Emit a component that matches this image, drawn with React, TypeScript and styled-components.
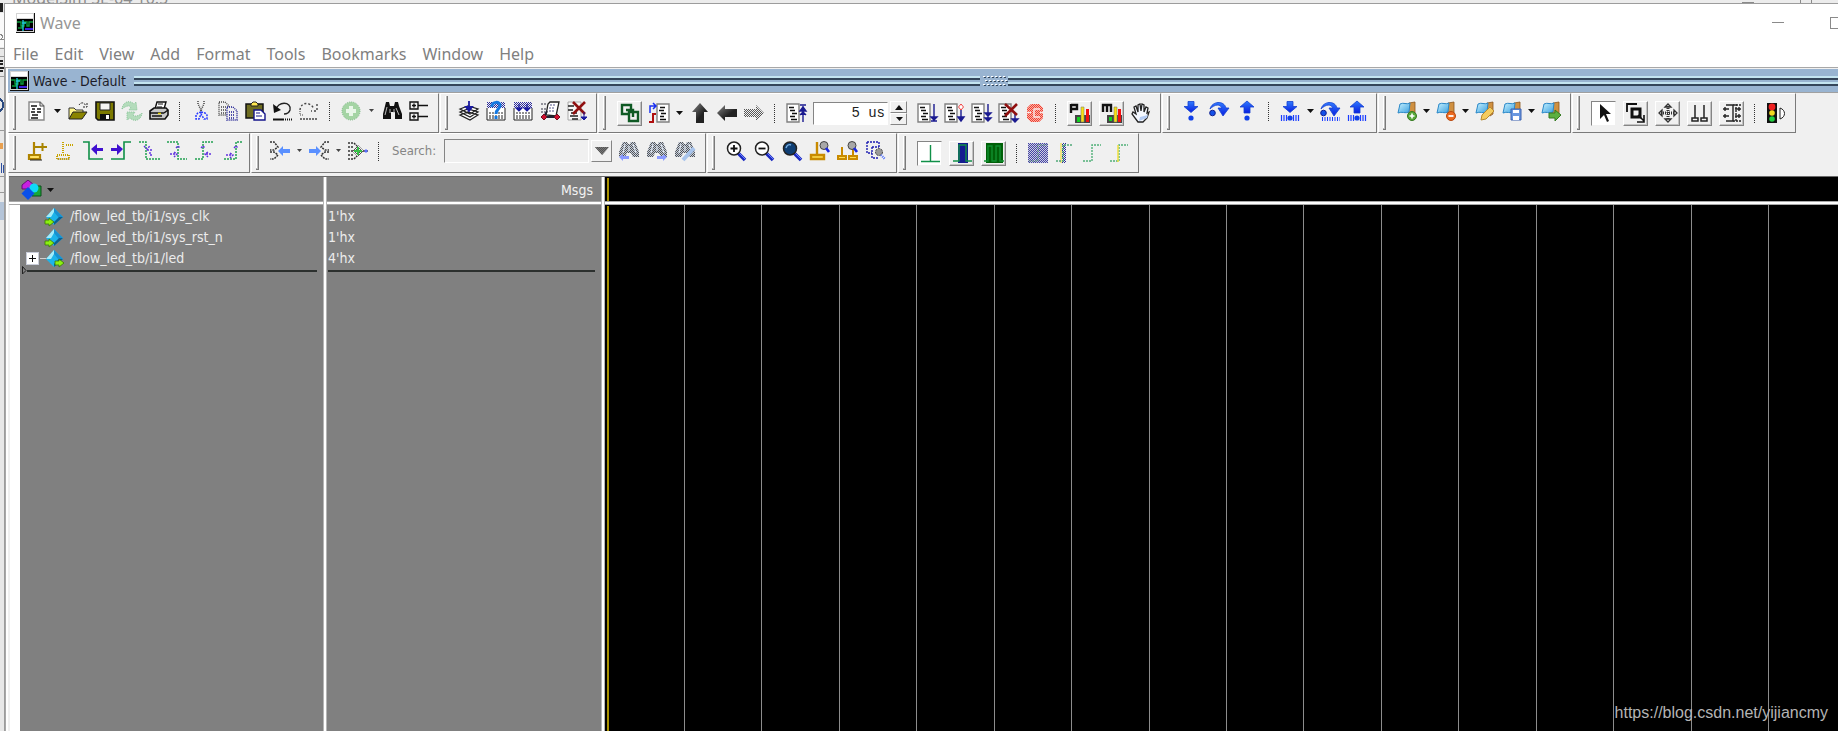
import React from "react";
import styled, { createGlobalStyle, css } from "styled-components";

const face = "#f0f0f0";
const shadow = "#7a7a7a";
const caption = "#99b4d1";
const pane = "#808080";
const uiFont = `"DejaVu Sans Condensed", "DejaVu Sans", sans-serif`;

const GlobalStyle = createGlobalStyle`
  *, *::before, *::after { box-sizing: border-box; }
  html, body { margin: 0; padding: 0; }
  body { overflow: hidden; background: ${face}; font-family: "Noto Sans", "Open Sans", sans-serif; }
  button, input { font: inherit; margin: 0; }
`;

/* ---------- window frame ---------- */

const Desktop = styled.div`
  position: relative;
  display: grid;
  grid-template-columns: 4px minmax(0, 1fr);
  grid-template-rows: 3px minmax(0, 1fr);
  height: 100vh;
  overflow: hidden;
  background: #e8e8e8;
`;

const BackTitle = styled.div`
  grid-column: 1 / -1;
  display: flex;
  align-items: flex-end;
  justify-content: space-between;
  overflow: hidden;
  padding-left: 12px;
  background: #ececec;
  color: #8c8c8c;
  font-size: 16px;
  line-height: 10px;
  white-space: nowrap;
`;

const BackMarks = styled.div`
  display: flex;
  gap: 10px;
  width: 96px;
  height: 3px;
  i { width: 1px; background: #8a8a8a; }
  i:first-child { width: 12px; height: 1px; margin: 2px 36px 0 0; }
`;

const BackEdge = styled.div`
  overflow: hidden;
  background: #e8e8e8;
`;

const Window = styled.main`
  display: flex;
  flex-direction: column;
  min-width: 0;
  border-top: 1px solid #9c9c9c;
  border-left: 1px solid #9c9c9c;
  background: #fff;
`;

const TitleBar = styled.header`
  display: flex;
  align-items: center;
  height: 36px;
  padding: 2px 0 0 11px;
  overflow: hidden;
  flex: none;
`;

const Title = styled.h1`
  margin: 0 auto 0 5px;
  font-size: 16px;
  line-height: 24px;
  font-weight: 400;
  color: #969696;
`;

const FrameButton = styled.button`
  display: flex;
  justify-content: center;
  width: 58px;
  padding: 0;
  border: 0;
  background: none;
`;

const FrameButtons = styled.div`
  display: flex;
  flex: none;
  margin-right: -27px;
`;

const MenuBar = styled.nav`
  display: flex;
  align-items: center;
  flex: none;
  gap: 16px;
  height: 27px;
  padding: 0 8px;
`;

const MenuItem = styled.button`
  padding: 0;
  border: 0;
  background: none;
  color: #808080;
  font-size: 16px;
  line-height: 20px;
`;

/* ---------- docked wave panel ---------- */

const Dock = styled.section`
  display: flex;
  flex-direction: column;
  flex: 1;
  min-height: 0;
  border-top: 1px solid #a8a8a8;
  border-left: 1px solid #a8a8a8;
  box-shadow: inset 2px 0 0 #fff;
  padding-left: 2px;
  background: ${face};
`;

const DockHeader = styled.header`
  display: flex;
  align-items: center;
  flex: none;
  height: 25px;
  padding-left: 2px;
  border-top: 1px solid ${face};
  border-bottom: 1px solid #a0a0a0;
  background: ${caption};
`;

const DockTitle = styled.h2`
  margin: 0 8px 0 4px;
  font-family: ${uiFont};
  font-size: 14px;
  line-height: 20px;
  font-weight: 400;
  color: #1c1c28;
`;

const Rails = styled.div`
  flex: ${(p: { $grow: number }) => p.$grow} 1 0;
  display: grid;
  gap: 2px;
  i {
    height: 4px;
    border-top: 2px solid #c4e4f0;
    border-bottom: 2px solid #35465a;
  }
`;

/* ---------- toolbars ---------- */

const ToolRow = styled.div`
  display: flex;
  flex: none;
  gap: 1px;
  height: 40px;
`;

const ToolBarBox = styled.div<{ $lift?: boolean; $tight?: boolean }>`
  display: flex;
  align-items: center;
  flex: none;
  padding: 0 ${(p) => (p.$tight ? 2 : 6)}px ${(p) => (p.$lift ? 4 : 0)}px 0;
  border: 1px solid #fff;
  border-right-color: ${shadow};
  border-bottom-color: ${shadow};
`;

const Grip = styled.span<{ $lift?: boolean }>`
  flex: none;
  width: 3px;
  height: 34px;
  margin: ${(p) => (p.$lift ? 4 : 0)}px 7px 0 4px;
  border: 1px solid ${shadow};
  border-width: 0 1px 1px 0;
  box-shadow: inset -1px -1px 0 #b8b8b8, inset 1px 0 0 #fff;
`;

const Tool = styled.button<{ $wide?: boolean }>`
  display: flex;
  align-items: center;
  justify-content: center;
  flex: none;
  width: ${(p) => (p.$wide ? 28 : 27)}px;
  height: 25px;
  padding: 0;
  border: 0;
  background: none;
`;

const BoxTool = styled(Tool)<{ $pressed?: boolean }>`
  width: 25px;
  margin: 0 3px 0 4px;
  border: 1px solid;
  border-color: #fff #858585 #858585 #fff;
  box-shadow: inset -1px -1px 0 #c2c2c2;
  ${(p) =>
    p.$pressed &&
    css`
      background: #fff;
      border-color: #858585 ${face} ${face} #858585;
      box-shadow: none;
    `}
`;

const CaretTool = styled(Tool)<{ $narrow?: boolean }>`
  width: ${(p) => (p.$narrow ? 12 : 14)}px;
`;

const Divider = styled.span`
  flex: none;
  width: 1px;
  height: 19px;
  margin: 0 7px;
  background: repeating-linear-gradient(#333 0 1px, transparent 1px 2px);
`;

const TimeInput = styled.input`
  width: 75px;
  height: 23px;
  margin-left: 4px;
  padding: 0 2px;
  border: 1px solid;
  border-color: #858585 #fff #fff #858585;
  background: #fff;
  color: #222;
  font-family: "Liberation Mono", monospace;
  font-size: 14px;
  text-align: right;
`;

const Spinner = styled.span`
  display: grid;
  width: 17px;
  height: 24px;
  margin: 0 6px 0 2px;
  button {
    display: flex;
    align-items: center;
    justify-content: center;
    padding: 0;
    background: ${face};
    border: 1px solid;
    border-color: #fff #858585 #858585 #fff;
  }
`;

const SearchLabel = styled.label`
  margin: 0 8px 0 6px;
  color: #858585;
  font-family: ${uiFont};
  font-size: 13px;
  line-height: 20px;
`;

const SearchInput = styled.input`
  width: 145px;
  height: 24px;
  border: 1px solid;
  border-color: #858585 #fff #fff #858585;
  background: ${face};
`;

const DropButton = styled(Tool)`
  width: 21px;
  height: 22px;
  margin: 0 3px 0 2px;
  border: 1px solid;
  border-color: #fff #858585 #858585 #fff;
`;

/* ---------- wave area ---------- */

const WaveArea = styled.div`
  display: grid;
  grid-template-columns: 314px 4px 274px 4px minmax(0, 1fr);
  grid-template-rows: 24px 4px minmax(0, 1fr);
  flex: 1;
  min-height: 0;
  margin: 3px 0 0 1px;
  border-top: 1px solid #6a6a6a;
`;

const HeadCell = styled.div<{ $right?: boolean; $dark?: boolean }>`
  display: flex;
  align-items: center;
  justify-content: ${(p) => (p.$right ? "flex-end" : "flex-start")};
  padding: ${(p) => (p.$dark ? "0" : "2px 8px 0 12px")};
  background: ${(p) => (p.$dark ? "#000" : pane)};
  color: #f2f2f2;
  font-family: ${uiFont};
  font-size: 14px;
  line-height: 20px;
`;

const Sash = styled.div`
  grid-row: 1 / -1;
  grid-column: ${(p: { $col: number }) => p.$col};
  border: 1px solid #b5b5b5;
  border-width: 0 1px;
  background: #fff;
`;

const Rule = styled.div`
  grid-row: 2;
  border: 1px solid #a8a8a8;
  border-width: 1px 0;
  background: #fff;
`;

const NamePane = styled.div`
  margin-left: 11px;
  background: ${pane};
  box-shadow: -10px 0 0 #fff;
`;

const ValuePane = styled.div`
  background: ${pane};
`;

const List = styled.ul`
  margin: 0;
  padding: 1px 0;
  list-style: none;
  color: #ececec;
  font-family: ${uiFont};
  font-size: 14px;
  line-height: 21px;
`;

const SignalRow = styled.li`
  display: grid;
  grid-template-columns: 14px 4px 24px 1fr;
  align-items: center;
  height: 21px;
  padding-left: 6px;
  span { padding-left: 2px; }
`;

const ValueRow = styled.li`
  height: 21px;
  padding-left: 1px;
`;

const Expander = styled.button`
  display: flex;
  align-items: center;
  justify-content: center;
  width: 13px;
  height: 13px;
  padding: 0;
  border: 1px solid #c8ccd8;
  background: #fff;
`;

const Stem = styled.i`
  width: 6px;
  height: 1px;
  background: #d0d0d0;
`;

const InsertMark = styled.div<{ $start?: boolean }>`
  display: flex;
  align-items: center;
  height: 9px;
  margin: -4px 6px 0 ${(p) => (p.$start ? 2 : 1)}px;
  &::after {
    content: "";
    flex: 1;
    height: 2px;
    background: #2c302e;
  }
`;

const Traces = styled.svg`
  display: block;
  width: 100%;
  height: 100%;
  background: #000;
  shape-rendering: crispEdges;
`;

const Watermark = styled.a`
  position: absolute;
  right: 10px;
  bottom: 8px;
  color: #b4b4b4;
  font-family: "Liberation Sans", Arial, sans-serif;
  font-size: 16px;
  line-height: 20px;
  text-decoration: none;
`;

/* ---------- drawings ---------- */

const PatternSheet = styled.svg`
  position: absolute;
  width: 0;
  height: 0;
`;

const Patterns = () => (
  <PatternSheet aria-hidden="true">
    <defs>
      {[
        ["dimBlack", "#555"],
        ["dimBlue", "#2b2b9a"],
        ["dimRed", "#f04030"],
      ].map(([id, color]) => (
        <pattern key={id} id={id} width="2" height="2" patternUnits="userSpaceOnUse">
          <path d="M0 0h1v1h-1zM1 1h1v1h-1z" fill={color} />
        </pattern>
      ))}
      <linearGradient id="blueArrow" x1="0" y1="0" x2="0" y2="1">
        <stop offset="0" stopColor="#2f7bff" />
        <stop offset="1" stopColor="#0a1ee0" />
      </linearGradient>
      <linearGradient id="steel" x1="0" y1="0" x2="1" y2="1">
        <stop offset="0" stopColor="#888" />
        <stop offset="0.6" stopColor="#222" />
      </linearGradient>
      <linearGradient id="folder" x1="0" y1="0" x2="1" y2="1">
        <stop offset="0" stopColor="#c8f2ff" />
        <stop offset="1" stopColor="#3aa0e0" />
      </linearGradient>
    </defs>
  </PatternSheet>
);

const WaveLogo = () => (
  <svg width="19" height="20" viewBox="0 0 19 20" aria-hidden="true">
    <path d="M0 0h19v20H0z" fill="#111" />
    <path d="M0 0h18v19H0z" fill="#d4d4d4" />
    <path d="M1 1h16v4H1z" fill="#fff" />
    <path d="M1 6h16v12H1z" fill="#000" />
    <path d="M1 9h4v4h3V9h3v4h2V9h4M2 15h4v-3" fill="none" stroke="#0a9a3a" strokeWidth="1.4" />
    <path d="M7 7v11M6 10h4" stroke="#20c8d8" strokeWidth="1.4" />
    <path d="M9 16h8" stroke="#4020e0" strokeWidth="2" />
  </svg>
);

const Page = ({ x = 1 }: { x?: number }) => (
  <>
    <path d={`M${x} 1h12v18h-12z`} fill="#fff" stroke="#808080" strokeWidth="1.4" />
    <path
      d={`M${x + 2} 4.500h5M${x + 3} 7.500h5M${x + 5} 10.500h5M${x + 3} 13.500h5M${x + 4} 16.500h6`}
      stroke="#111"
      strokeWidth="1.7"
    />
  </>
);

const Binocs = () => (
  <>
    <path d="M4 1h3l1 4h4l1-4h3l1 4 3 8v5h-7v-7H9v7H1v-5l2-8z" fill="#111" />
    <path d="M5 6l-2 8M8 8v4M12 8v4M14 7l3 7" stroke="#bbb" strokeWidth="1" />
  </>
);

const DimBinocs = () => (
  <>
    <path d="M4 1h4l1 2h2l1-2h4l4 10v5h-6l-2-4h-4l-2 4H0v-5z" fill="#c4cedf" />
    <path d="M4 1h4l1 2h2l1-2h4l4 10v5h-6l-2-4h-4l-2 4H0v-5z" fill="url(#dimBlack)" />
    <path d="M6 3l-2 9M10 5v5M14 3l3 9" stroke="#dce4f0" strokeWidth="1.200" />
  </>
);

const Down = () => (
  <path d="M7 .5h6v5h4l-7 6-7-6h4z" fill="url(#blueArrow)" stroke="#1440d0" strokeWidth=".8" />
);
const Up = () => <path d="M7 12V6H3l7-6 7 6h-4v6z" fill="url(#blueArrow)" stroke="#1440d0" strokeWidth=".8" />;
const Over = () => (
  <>
    <path d="M1 8C3 0 15-1 17 7h3l-6 8-5-8h4C11 3 6 3 1 8z" fill="url(#blueArrow)" stroke="#1440d0" strokeWidth=".8" />
    <circle cx="3.500" cy="12" r="2.800" fill="#1450e8" stroke="#102090" />
  </>
);
const Bars = () => <path d="M1.500 14v6M4 14v6M6.500 14v6M13.500 14v6M16 14v6M18.500 14v6" stroke="#1a3cff" strokeWidth="1.2" />;

const BookFolder = () => (
  <>
    <path d="M12 2l6-1v12l-3 2-4-3z" fill="#d09040" stroke="#8a5520" strokeWidth=".8" />
    <path d="M3 3c4-2 6 1 10-1l-1 9c-4 2-7-1-11 1z" fill="url(#folder)" stroke="#2a88c8" />
  </>
);

const Lens = ({ fill = "#fff" }: { fill?: string }) => (
  <>
    <path d="M12 12l7 7" stroke="#1a28c0" strokeWidth="3.600" />
    <path d="M13 12l6 6" stroke="#6a80ff" strokeWidth="1" />
    <circle cx="8" cy="7.500" r="6.500" fill={fill} stroke="#222" strokeWidth="1.500" />
  </>
);

const art: Record<string, React.ReactNode> = {
  newDoc: (
    <>
      <path d="M2 1h11l4 4v14H2z" fill="#fff" stroke="#888" strokeWidth="1.400" />
      <path d="M13 1v4h4" fill="none" stroke="#444" />
      <path d="M4 5h6M5 8h3m2 0h4M4 11h4m2 0h4M5 14h6M4 17h7" stroke="#111" strokeWidth="1.500" />
    </>
  ),
  open: (
    <>
      <path d="M1 18V7h5l2 2h7v3" fill="#fff68a" stroke="#333" />
      <path d="M1 18l4-7h14l-5 7z" fill="#8a8400" stroke="#222" />
      <path d="M11 4c2-3 5-3 7 1m1-3v4h-4" fill="none" stroke="#222" strokeDasharray="2 1" />
    </>
  ),
  save: (
    <>
      <path d="M1 1h18v18H3l-2-2z" fill="#7c7a00" stroke="#111" strokeWidth="1.600" />
      <path d="M5 2h10v7H5z" fill="#f4f4f4" stroke="#222" />
      <path d="M5 13h10v6H5z" fill="#111" />
      <path d="M11 14h3v4h-3z" fill="#fff" />
    </>
  ),
  refresh: (
    <g fill="#b4dcbc" stroke="#88c498" strokeDasharray="1 1">
      <path d="M0 8c1-8 8-9 12-5l2-2 1 8H7l2-3c-2-2-5-1-9 2z" />
      <path d="M20 12c-1 8-8 9-12 5l-3 2V11h8l-2 3c2 2 6 1 9-2z" />
    </g>
  ),
  print: (
    <>
      <path d="M6 8l2-7h9l-2 7z" fill="#fff" stroke="#111" strokeWidth="1.400" />
      <path d="M9 3h5M8 6h5" stroke="#111" />
      <path d="M1 10l4-3h12l2 2v5l-3 4H1z" fill="#c8c8c8" stroke="#111" strokeWidth="1.600" />
      <path d="M1 12h14M3 15h10M15 12l4-3" stroke="#111" strokeWidth="1.500" />
      <path d="M9 12.500h3" stroke="#e0d000" strokeWidth="1.500" />
    </>
  ),
  cut: (
    <>
      <path d="M7 0v3l4 8M13 0v3l-4 8" fill="none" stroke="#444" strokeDasharray="1 1" strokeWidth="1.500" />
      <path d="M10 11l-3 1-2 2v4h3l2-5 3 5h3v-4l-2-2z" fill="none" stroke="#2a3cff" strokeDasharray="2 1" strokeWidth="1.500" />
    </>
  ),
  copy: (
    <>
      <path d="M1 1h6l4 4v9H1zM3 6h5M3 9h5M3 12h5" fill="none" stroke="#444" strokeDasharray="1 1" strokeWidth="1.400" />
      <path d="M9 6h6l4 4v9H9zM11 11h5M11 14h6M11 17h6" fill="#f0f0f0" stroke="#1a1a90" strokeDasharray="1 1" strokeWidth="1.400" />
    </>
  ),
  paste: (
    <>
      <path d="M1 3h17v14H1z" fill="#6e6c20" stroke="#111" strokeWidth="1.500" />
      <path d="M6 5V3l2-2h3l2 2v2z" fill="#ffe850" stroke="#222" />
      <path d="M9 9h7l4 4v6H9z" fill="#fff" stroke="#14148a" strokeWidth="1.400" />
      <path d="M11 12h4M11 15h6" stroke="#14148a" />
    </>
  ),
  undo: (
    <>
      <path d="M4 9C5 0 20 0 18 9c-1 3-4 4-6 4" fill="none" stroke="#222" strokeWidth="1.400" />
      <path d="M1 3l1 9 7-3z" fill="#111" />
      <path d="M1 18.500h11" stroke="#111" strokeWidth="2" />
      <path d="M13 18.500h7" stroke="#111" strokeWidth="2" strokeDasharray="1 1" />
    </>
  ),
  redo: (
    <>
      <path d="M1 9c1-9 11-8 14-1M18 3v7h-6" fill="none" stroke="#444" strokeWidth="1.400" strokeDasharray="2 2" />
      <path d="M1 10v4h4" fill="none" stroke="#444" strokeDasharray="1 1" />
      <path d="M1 18h18" stroke="#444" strokeWidth="1.500" strokeDasharray="2 1" />
    </>
  ),
  add: (
    <>
      <circle cx="10" cy="10" r="9" fill="#a4d4a4" stroke="#78b880" strokeDasharray="1 1" />
      <path d="M8 5h4v3h3v4h-3v3H8v-3H5V8h3z" fill="#e8f6e8" />
    </>
  ),
  find: <Binocs />,
  tree: (
    <g fill="none" stroke="#111" strokeWidth="1.400">
      <path d="M1 1h8v7H1zM1 12h8v7H1zM9 4.500h10M9 15.500h10M3 4.500h4M5 2.500v4M3 15.500h4M5 13.500v4" />
    </g>
  ),
  compile: (
    <>
      <path d="M1 14l8-3 10 3-8 5zM1 11l8-3 10 3-8 5zM1 8l8-3 10 3-8 5z" fill="#fff" stroke="#222" strokeWidth="1.200" />
      <path d="M10 0v8M7 6l3 4 3-4z" stroke="#1a1aa0" strokeWidth="1.800" fill="#1a1aa0" />
    </>
  ),
  compileAsk: (
    <>
      <path d="M1 1h18v6H1z" fill="url(#dimBlue)" />
      <path d="M1 7v12h18V7" fill="#fff" stroke="#222" />
      <path d="M3 12h14M3 15h14M3 17h14" stroke="#222" strokeDasharray="2 1" />
      <path d="M6 6c-1-6 9-6 8-1-1 4-4 3-4 8M10 15v3" fill="none" stroke="#1478e0" strokeWidth="3" />
    </>
  ),
  compileAll: (
    <>
      <path d="M1 1h18v6H1z" fill="url(#dimBlue)" />
      <path d="M1 7v12h18V7" fill="#fff" stroke="#222" />
      <path d="M3 12h14M3 15h14M3 17h14" stroke="#222" strokeDasharray="2 1" />
      <path d="M6 3v5M14 3v5M3 7h6l-3 3zM11 7h6l-3 3z" stroke="#1a1aa0" fill="#1a1aa0" strokeWidth="1.200" />
    </>
  ),
  simulate: (
    <>
      <path d="M6 14L8 3l2-2h9l-3 14z" fill="#fff" stroke="#222" strokeWidth="1.300" />
      <path d="M1 8h5M1 3h6M1 11h4" stroke="#334" strokeDasharray="2 1" />
      <path d="M10 4h6M9 7h6M9 10h5" stroke="#558" strokeDasharray="2 1" />
      <path d="M4 16h13M5 14l2-4" stroke="#223" strokeWidth="2" />
      <path d="M4 13l3 3-3 3-3-3zM17 13l3 3-3 3-3-3z" fill="#d01030" stroke="#701020" />
    </>
  ),
  breakSim: (
    <>
      <path d="M1 1h13v18H1z" fill="#f8f8f8" stroke="#aaa" />
      <path d="M1 5h6M1 9h5M4 12h6M3 15h8M5 18h6" stroke="#222" strokeWidth="1.400" />
      <path d="M6 1l12 12M18 1L6 13" stroke="#901010" strokeWidth="2.600" />
      <path d="M17 11v6M14 16h6l-3 3z" stroke="#1a1aa0" fill="#1a1aa0" />
    </>
  ),
  windows: (
    <g fill="none" stroke="#0f5a24" strokeWidth="2.400">
      <path d="M8 11H2V2h9v4" />
      <path d="M9 9h9v9H9zM6 7h7v7" />
    </g>
  ),
  restart: (
    <>
      <path d="M8 1h12v18H8z" fill="#fff" stroke="#808080" strokeWidth="1.400" />
      <path d="M11 4.500h5M10 7.500h5M12 10.500h5M11 13.500h4M11 16.500h6" stroke="#111" strokeWidth="1.600" />
      <path d="M1 10V3h5M4 0l3 3-3 3" fill="none" stroke="#1a30f0" strokeWidth="1.500" />
      <path d="M0 19h4v-8h3" fill="none" stroke="#b01010" strokeWidth="2" />
    </>
  ),
  upArrow: <path d="M10 0l8 9h-4v11H6V9H2z" fill="url(#steel)" />,
  leftArrow: <path d="M0 10l8-8v4h12v8H8v4z" fill="url(#steel)" />,
  rightArrow: <path d="M20 10l-8-8v4H0v8h12v4z" fill="url(#dimBlack)" />,
  runLength: (
    <>
      <Page />
      <path d="M17 19V3M14 8l3-4 3 4zM14 2h6M14 12l3-3 3 3" stroke="#1a1a90" strokeWidth="1.400" fill="#1a1a90" />
    </>
  ),
  run: (
    <>
      <Page />
      <path d="M17 1v14M14 14l3 3 3-3zM14 18h6" stroke="#1a1a90" strokeWidth="1.400" fill="#1a1a90" />
    </>
  ),
  runTo: (
    <>
      <Page />
      <path d="M17 7v9M14 14l3 4 3-4z" stroke="#1a1a90" strokeWidth="1.400" fill="#1a1a90" />
      <path d="M17 1l2.500 3L17 7l-2.500-3z" fill="#fff" stroke="#f04040" />
    </>
  ),
  runAll: (
    <>
      <Page />
      <path d="M17 1v14M14 10l3 3 3-3zM14 15l3 3 3-3z" stroke="#1a1a90" strokeWidth="1.400" fill="#1a1a90" />
    </>
  ),
  runStop: (
    <>
      <Page />
      <path d="M17 10v8M14 16l3 3 3-3z" stroke="#1a1a90" strokeWidth="1.400" fill="#1a1a90" />
      <path d="M7 1l12 11M19 1L7 13" stroke="#901010" strokeWidth="2.600" />
    </>
  ),
  stop: (
    <>
      <path d="M6 1h8l4 4v10l-4 4H6l-4-4V5z" fill="#f8b0a8" />
      <path d="M6 1h8l4 4v10l-4 4H6l-4-4V5z" fill="url(#dimRed)" />
      <path d="M1 9.500h5M9 6h6M9 6v8h6M15 9.500h4" fill="none" stroke="#fbe8e6" strokeWidth="1.400" />
    </>
  ),
  profile: (
    <>
      <path d="M1 1v9M1 2h6v4H1" fill="none" stroke="#111" strokeWidth="2.400" />
      <path d="M5 12h15v8H5z" fill="#444" />
      <path d="M7 14h3v5H7z" fill="#10d020" />
      <path d="M11 4h3v15h-3z" fill="#f8e010" stroke="#886" strokeWidth=".600" />
      <path d="M16 6h3v13h-3z" fill="#f01010" />
    </>
  ),
  memory: (
    <>
      <path d="M1 9V2h8v7M5 2v7" fill="none" stroke="#111" strokeWidth="2.400" />
      <path d="M5 12h15v8H5z" fill="#444" />
      <path d="M7 14h3v4H7z" fill="#10d020" />
      <path d="M12 4h3v15h-3z" fill="#f8e010" stroke="#886" strokeWidth=".600" />
      <path d="M16 6h3v13h-3z" fill="#f01010" />
    </>
  ),
  hand: (
    <>
      <path
        d="M7 19l-6-8 1-2 3 2-2-7 2-1 2 6V2l2-1 1 7 1-7 2 1v7l2-5 2 1-1 5 2-1-2 6-4 4z"
        fill="#f4f8ff"
        stroke="#222"
        strokeWidth="1.300"
      />
      <path d="M8 18l8-3 1-3-8 2z" fill="#b4ccf4" />
    </>
  ),
  stepIn: (
    <>
      <Down />
      <circle cx="10" cy="17" r="2.600" fill="#1040e8" />
    </>
  ),
  stepOver: <Over />,
  stepOut: (
    <>
      <Up />
      <circle cx="10" cy="17" r="2.600" fill="#1040e8" />
    </>
  ),
  stepInBar: (
    <>
      <Down />
      <Bars />
      <circle cx="10" cy="17" r="2.600" fill="#1040e8" />
    </>
  ),
  stepOverBar: (
    <>
      <Over />
      <path d="M2 18h18" stroke="#1a3cff" strokeWidth="4" strokeDasharray="1 1.500" />
    </>
  ),
  stepOutBar: (
    <>
      <Up />
      <Bars />
      <circle cx="10" cy="17" r="2.600" fill="#1040e8" />
    </>
  ),
  markAdd: (
    <>
      <BookFolder />
      <circle cx="15" cy="15" r="4.500" fill="#5aa83a" stroke="#357a20" />
      <path d="M12.500 15h5M15 12.500v5" stroke="#fff" strokeWidth="1.600" />
    </>
  ),
  markDelete: (
    <>
      <BookFolder />
      <circle cx="15" cy="15" r="4.500" fill="#ec6a20" stroke="#b84810" />
      <path d="M12.500 15h5" stroke="#fff" strokeWidth="1.800" />
    </>
  ),
  markEdit: (
    <>
      <BookFolder />
      <path d="M6 19l1-5 8-8 4 4-8 8z" fill="#f4cc60" stroke="#b88a30" />
    </>
  ),
  markSave: (
    <>
      <BookFolder />
      <path d="M9 8h10v11H9z" fill="#6a98e0" stroke="#3a60b0" />
      <path d="M11 9h6v3h-6zM11 15h6v4h-6z" fill="#fff" />
    </>
  ),
  markLoad: (
    <>
      <BookFolder />
      <path d="M8 12h6V9l6 5-6 6v-3H8z" fill="#5cb040" stroke="#357a20" />
    </>
  ),
  pointer: <path d="M6 1v15l4-4 3 7 2-1-3-7h5z" fill="#111" />,
  zoomBox: (
    <g fill="none" stroke="#111">
      <path d="M1 9V1h10" strokeWidth="1.800" />
      <path d="M6 6h8v8H6z" strokeWidth="3" />
      <path d="M12 12l6 6M18 12v7h-7" strokeWidth="1.600" />
    </g>
  ),
  pan: (
    <g fill="none" stroke="#333" strokeWidth="1.300">
      <path d="M10 3v14M3 10h14" strokeDasharray="1 1" strokeWidth="3" />
      <path d="M7 4l3-3 3 3zM7 16l3 3 3-3zM4 7l-3 3 3 3zM16 7l3 3-3 3z" />
    </g>
  ),
  twoCursors: (
    <path d="M5 2v13M14 2v13M2 15h6v3H2zM11 15h6v3h-6z" fill="none" stroke="#222" strokeWidth="1.500" />
  ),
  editWave: (
    <g stroke="#222" strokeWidth="1.400" fill="none">
      <path d="M4 2h7v16H4" />
      <path d="M14 1v18M11 2h8M11 18h8" strokeDasharray="2 1" />
      <path d="M1 6h6M1 13h6M13 6h6M13 13h6M3 4v4M3 11v4M17 4v4M17 11v4" />
    </g>
  ),
  traffic: (
    <>
      <path d="M1 0h10v20H1z" fill="#111" />
      <circle cx="6" cy="4" r="3.400" fill="#f02020" />
      <circle cx="6" cy="10" r="2.800" fill="#f0d820" />
      <circle cx="6" cy="16" r="2.800" fill="#20d040" />
      <path d="M14 5c6 2 6 9 0 11z" fill="#fff" stroke="#222" />
    </>
  ),
  cursorAdd: (
    <>
      <path d="M7 1v13M2 14h11v4H2z" fill="#ffe060" stroke="#b08400" strokeWidth="2.200" />
      <path d="M8 6h12M15.500 2v8" stroke="#a88400" strokeWidth="2" />
      <path d="M3 19h12" stroke="#222" strokeWidth="1" />
    </>
  ),
  cursorDelete: (
    <>
      <path d="M8 1v12M2 14h12v4H2zM11 4h7" fill="none" stroke="#c8a400" strokeWidth="2" strokeDasharray="1 1" />
      <path d="M2 18h13" stroke="#998" strokeDasharray="1 1" />
    </>
  ),
  prevEdge: (
    <>
      <path d="M0 1h6v17h14" fill="none" stroke="#109048" strokeWidth="1.600" />
      <path d="M8 8l6-5v4h6v3h-6v4z" fill="#4010d0" />
    </>
  ),
  nextEdge: (
    <>
      <path d="M0 18h13V1h7" fill="none" stroke="#109048" strokeWidth="1.600" />
      <path d="M12 8L6 3v4H0v3h6v4z" fill="#4010d0" />
    </>
  ),
  prevFall: (
    <>
      <path d="M0 1h7v17h14" fill="none" stroke="#20a050" strokeWidth="1.500" strokeDasharray="2 1" />
      <path d="M5 5l3 3 3-3M8 9h6M11 11v3h3" fill="none" stroke="#6030e0" strokeDasharray="2 1" strokeWidth="1.400" />
    </>
  ),
  nextFall: (
    <>
      <path d="M0 1h11v17h9" fill="none" stroke="#20a050" strokeWidth="1.500" strokeDasharray="2 1" />
      <path d="M3 13h5M7 11l3 2-3 3M9 7l2-2 2 2" fill="none" stroke="#6030e0" strokeDasharray="2 1" strokeWidth="1.400" />
    </>
  ),
  prevRise: (
    <>
      <path d="M0 18h8V1h11" fill="none" stroke="#20a050" strokeWidth="1.500" strokeDasharray="2 1" />
      <path d="M6 7l2-2 2 2M16 13h-5M13 11l-3 2 3 3" fill="none" stroke="#6030e0" strokeDasharray="2 1" strokeWidth="1.400" />
    </>
  ),
  nextRise: (
    <>
      <path d="M1 18h12V1h6" fill="none" stroke="#20a050" strokeWidth="1.500" strokeDasharray="2 1" />
      <path d="M3 14h5M7 12l3 2-3 3M11 7l2-2 2 2" fill="none" stroke="#6030e0" strokeDasharray="2 1" strokeWidth="1.400" />
    </>
  ),
  merge: (
    <>
      <path d="M0 1h4l4 5-4 3H0M0 11h4l4 3-4 4H0" fill="none" stroke="#333" strokeWidth="1.500" strokeDasharray="2 1" />
      <path d="M8 10l5-5v3h7v4h-7v3z" fill="#5a90ff" />
    </>
  ),
  split: (
    <>
      <path d="M20 1h-4l-4 5 4 3h4M20 11h-4l-4 3 4 4h4" fill="none" stroke="#333" strokeWidth="1.500" strokeDasharray="2 1" />
      <path d="M12 10L7 5v3H0v4h7v3z" fill="#5a90ff" />
    </>
  ),
  driver: (
    <>
      <path d="M0 2h6l3 3M0 18h6l3-3M0 6h5M0 10h20M0 14h5" fill="none" stroke="#333" strokeWidth="1.500" strokeDasharray="2 1" />
      <path d="M10 4l6 6-6 6-6-6z" fill="url(#dimBlack)" />
      <path d="M10 6v8M6 10h8" stroke="#38c048" strokeWidth="2" />
      <path d="M18 8l2 2-2 2-2-2z" fill="#5a70ff" />
    </>
  ),
  findPrev: (
    <>
      <DimBinocs />
      <path d="M0 16l4-3v2h6v3H4v2z" fill="#8a9aff" />
    </>
  ),
  findNext: (
    <>
      <DimBinocs />
      <path d="M20 16l-4-3v2h-6v3h6v2z" fill="#8a9aff" />
    </>
  ),
  findOptions: (
    <>
      <DimBinocs />
      <path d="M8 19L19 7" stroke="#a8c4ec" strokeWidth="4" />
    </>
  ),
  zoomIn: (
    <>
      <Lens />
      <path d="M4.500 7.500h7M8 4v7" stroke="#111" strokeWidth="1.800" />
    </>
  ),
  zoomOut: (
    <>
      <Lens />
      <path d="M4.500 7.500h7" stroke="#111" strokeWidth="1.800" />
    </>
  ),
  zoomFull: (
    <>
      <Lens fill="#0e3e74" />
      <path d="M4 7c1-3 3-4 5-3" stroke="#7ab0e0" fill="none" strokeWidth="1.400" />
    </>
  ),
  zoomCursor: (
    <>
      <path d="M7 1v13M1 14h13v4H1z" fill="#ffdc50" stroke="#c88a00" strokeWidth="2.400" />
      <circle cx="14" cy="4.500" r="4" fill="#a8a8a8" stroke="#444" />
      <path d="M16 7l3 4" stroke="#1a28e0" strokeWidth="2.600" />
    </>
  ),
  zoomTwo: (
    <>
      <path d="M4 6v9M15 8v7M0 15h8v3H0zM11 15h8v3h-8z" fill="#ffdc50" stroke="#c88a00" strokeWidth="2" />
      <circle cx="14" cy="4.500" r="4" fill="#a8a8a8" stroke="#444" />
      <path d="M16 7l3 4" stroke="#1a28e0" strokeWidth="2.600" />
    </>
  ),
  zoomArea: (
    <>
      <path d="M1 1h12v5M1 1v11h5M6 6h7M6 6v11h6" fill="none" stroke="#1a1ab0" strokeDasharray="2 1" strokeWidth="1.400" />
      <circle cx="13" cy="11" r="3.500" fill="#999" stroke="#444" strokeDasharray="2 1" />
      <path d="M15 14l4 4" stroke="#4a6cff" strokeWidth="2.400" strokeDasharray="1 1" />
    </>
  ),
  expandOff: <path d="M10.500 2v16M1 18.500h19" stroke="#109048" strokeWidth="1.400" />,
  expandDelta: (
    <>
      <path d="M6 0h10v20H6z" fill="#141c90" />
      <path d="M1 18h6V2h7v16h6" fill="none" stroke="#109048" strokeWidth="1.400" />
    </>
  ),
  expandEvent: (
    <>
      <path d="M2 0h17v20H2z" fill="#006008" />
      <path d="M0 18h4V3h4v15h4V3h4v15h4" fill="none" stroke="#109030" strokeWidth="1.400" />
    </>
  ),
  expandAll: (
    <>
      <path d="M0 0h20v20H0z" fill="url(#dimBlue)" />
      <path d="M0 0h20v20H0z" fill="#8080c0" opacity=".3" />
      <path d="M1 18h9V2h9" fill="none" stroke="#68a080" strokeDasharray="2 1" />
    </>
  ),
  expandAt: (
    <>
      <path d="M7 0h4v20H7z" fill="url(#dimBlue)" />
      <path d="M6 0v20" stroke="#f0e060" strokeWidth="1.500" />
      <path d="M1 18h7V2h10" fill="none" stroke="#50a878" strokeDasharray="2 1" strokeWidth="1.400" />
    </>
  ),
  collapseAll: <path d="M1 18h9V2h9" fill="none" stroke="#50b078" strokeDasharray="2 1" strokeWidth="1.400" />,
  collapseAt: (
    <>
      <path d="M1 18h9V2h9" fill="none" stroke="#50b078" strokeDasharray="2 1" strokeWidth="1.400" />
      <path d="M9 2v17" stroke="#f0e040" strokeWidth="1.500" />
    </>
  ),
};

const Art = ({ name }: { name: string }) => (
  <svg width="20" height="20" viewBox="0 0 20 20" overflow="visible" aria-hidden="true">
    {art[name]}
  </svg>
);

const Triangle = ({ up, small }: { up?: boolean; small?: boolean }) => (
  <svg width="8" height="5" viewBox="0 0 8 5" aria-hidden="true">
    <path d={up ? "M0 5h8L4 0z" : small ? "M2 0h5L4.500 3z" : "M1 0h7L4.500 4z"} fill={small ? "#444" : "#111"} />
  </svg>
);

const SignalIcon = ({ output }: { output?: boolean }) => (
  <svg width="20" height="20" viewBox="0 0 20 20" aria-hidden="true">
    <path d="M10 1l9 9-9 8-8-8z" fill="#1cb4ea" />
    <path d="M10 1l9 9-4 1-5-6z" fill="#1890d0" />
    <path d="M10 18l9-8-4 0-5 5z" fill="#0c6090" />
    <path d="M10 1L2 10h5l3-5z" fill="#a4ecfa" />
    {output ? (
      <path d="M11 12h4v-2l5 4-5 4v-2h-4z" fill="#8cf010" stroke="#3a7808" strokeWidth=".800" />
    ) : (
      <path d="M1 13h4v-2l5 4-5 4v-2H1z" fill="#8cf010" stroke="#3a7808" strokeWidth=".800" />
    )}
  </svg>
);

const ObjectsIcon = () => (
  <svg width="22" height="20" viewBox="0 0 22 20" aria-hidden="true">
    <path d="M7 0l6 5-2 4H1V5z" fill="#c820e0" stroke="#601070" />
    <path d="M12 6h8v10h-9z" fill="#18a838" stroke="#0a5018" />
    <circle cx="13" cy="8" r="4.500" fill="#10d8f8" />
    <path d="M7 7l6.500 6.500L7 20 .500 13.500z" fill="#0a50e8" />
  </svg>
);

/* ---------- page ---------- */

/* "|" divider, "v" caret, "w" dimmed caret, "#x" raised button, "*x" pressed button, "-x" disabled tool */
const Tools = ({ items, narrow, wide }: { items: string[]; narrow?: boolean; wide?: boolean }) => (
  <>
    {items.map((item, i) => {
      if (item === "|") return <Divider key={i} />;
      if (item === "v" || item === "w")
        return (
          <CaretTool key={i} $narrow={narrow} disabled={item === "w"} aria-label="More">
            <Triangle small={item === "w"} />
          </CaretTool>
        );
      const mode = item[0];
      const name = item.replace(/^[#*-]/, "");
      if (mode === "#" || mode === "*")
        return (
          <BoxTool key={i} $pressed={mode === "*"} aria-label={name} aria-pressed={mode === "*"}>
            <Art name={name} />
          </BoxTool>
        );
      return (
        <Tool key={i} $wide={wide} disabled={mode === "-"} aria-label={name}>
          <Art name={name} />
        </Tool>
      );
    })}
  </>
);

const ToolBar = ({
  lift,
  tight,
  children,
}: {
  lift?: boolean;
  tight?: boolean;
  children: React.ReactNode;
}) => (
  <ToolBarBox role="toolbar" $lift={lift} $tight={tight}>
    <Grip $lift={lift} />
    {children}
  </ToolBarBox>
);

const menus = ["File", "Edit", "View", "Add", "Format", "Tools", "Bookmarks", "Window", "Help"];

const signals = [
  { name: "/flow_led_tb/i1/sys_clk", value: "1'hx" },
  { name: "/flow_led_tb/i1/sys_rst_n", value: "1'hx" },
  { name: "/flow_led_tb/i1/led", value: "4'hx", bus: true },
];

const gridLines = Array.from({ length: 40 }, (_, i) => 79 + Math.round((i * 542) / 7));

const App = () => (
  <Desktop>
    <GlobalStyle />
    <Patterns />
    <BackTitle aria-hidden="true">
      ModelSim SE-64 10.5
      <BackMarks>
        <i />
        <i />
        <i />
      </BackMarks>
    </BackTitle>
    <BackEdge>
      <svg width="4" height="260" viewBox="0 0 4 260" shapeRendering="crispEdges" aria-hidden="true">
        <path d="M0 0h3v9H0z" fill="#222" />
        <path d="M0 10h4v34H0z" fill="#fafafa" />
        <path d="M0 31c3 0 3 5 0 6M0 36h4" fill="none" stroke="#888" />
        <path d="M0 45h4M0 53h4M0 73h4M0 127h4M0 173h4M0 189h4" stroke="#999" />
        <path d="M0 58h3M0 61h3M0 65h4M0 68h3" stroke="#222" strokeWidth="2" />
        <path d="M0 96c4 2 4 10 0 12" fill="none" stroke="#2a4a80" strokeWidth="2" />
        <path d="M1 160v10M3 162v8" stroke="#3050a0" />
        <path d="M0 140h3v6H0z" fill="#e8a050" />
        <path d="M0 199h4v18H0z" fill="#b4c4d8" />
      </svg>
    </BackEdge>
    <Window>
      <TitleBar>
        <WaveLogo />
        <Title>Wave</Title>
        <FrameButtons>
          <FrameButton aria-label="Minimize">
            <svg width="12" height="12" shapeRendering="crispEdges">
              <path d="M0 5.500h12" stroke="#8a8a8a" />
            </svg>
          </FrameButton>
          <FrameButton aria-label="Maximize">
            <svg width="12" height="12" shapeRendering="crispEdges">
              <path d="M.5.5h11v11H.5z" fill="none" stroke="#8a8a8a" />
            </svg>
          </FrameButton>
        </FrameButtons>
      </TitleBar>
      <MenuBar>
        {menus.map((m) => (
          <MenuItem key={m}>{m}</MenuItem>
        ))}
      </MenuBar>
      <Dock>
        <DockHeader>
          <WaveLogo />
          <DockTitle>Wave - Default</DockTitle>
          <Rails $grow={51}>
            <i />
            <i />
          </Rails>
          <svg width="28" height="12" shapeRendering="crispEdges" aria-hidden="true">
            {[0, 1, 2].map((r) =>
              [0, 1, 2, 3, 4, 5].map((c) => (
                <g key={`${r}-${c}`}>
                  <path d={`M${3 + c * 4 + (r % 2) * 2} ${1 + r * 4}h2v1h-2z`} fill="#fff" />
                  <path d={`M${4 + c * 4 + (r % 2) * 2} ${2 + r * 4}h2v1h-2z`} fill="#35465a" />
                </g>
              ))
            )}
          </svg>
          <Rails $grow={50}>
            <i />
            <i />
          </Rails>
        </DockHeader>
        <ToolRow>
          <ToolBar lift>
            <Tools
              items={["newDoc", "v", "open", "save", "-refresh", "print", "|", "-cut", "-copy", "paste", "undo", "-redo", "|", "-add", "w", "find", "tree"]}
            />
          </ToolBar>
          <ToolBar lift>
            <Tools items={["compile", "compileAsk", "compileAll", "simulate", "breakSim"]} />
          </ToolBar>
          <ToolBar>
            <Tools items={["#windows", "restart", "v", "upArrow", "leftArrow", "-rightArrow", "|", "runLength"]} />
            <TimeInput aria-label="Run length" defaultValue="5 us" />
            <Spinner>
              <button aria-label="Increase">
                <Triangle up />
              </button>
              <button aria-label="Decrease">
                <Triangle />
              </button>
            </Spinner>
            <Tools items={["run", "runTo", "runAll", "runStop", "-stop", "|", "#profile", "#memory", "hand"]} />
          </ToolBar>
          <ToolBar lift>
            <Tools narrow wide items={["stepIn", "stepOver", "stepOut", "|", "stepInBar", "v"]} />
            <Tools items={["stepOverBar", "stepOutBar"]} />
          </ToolBar>
          <ToolBar lift>
            <Tools narrow items={["markAdd", "v", "markDelete", "v", "markEdit", "markSave", "v", "markLoad"]} />
          </ToolBar>
          <ToolBar>
            <Tools items={["*pointer", "#zoomBox", "#pan", "#twoCursors", "#editWave", "|", "traffic"]} />
          </ToolBar>
        </ToolRow>
        <ToolRow>
          <ToolBar lift tight>
            <Tools wide items={["cursorAdd", "-cursorDelete", "prevEdge", "nextEdge", "-prevFall", "-nextFall", "-prevRise", "-nextRise"]} />
          </ToolBar>
          <ToolBar lift>
            <Tools narrow items={["-merge", "w", "-split", "w", "-driver", "|"]} />
            <SearchLabel htmlFor="search">Search:</SearchLabel>
            <SearchInput id="search" />
            <DropButton aria-label="Search history">
              <svg width="14" height="8" aria-hidden="true">
                <path d="M0 0h14L7 8z" fill="#777" />
                <path d="M0 0h14L7 8z" fill="url(#dimBlack)" />
              </svg>
            </DropButton>
            <Tools wide items={["-findPrev", "-findNext", "-findOptions"]} />
          </ToolBar>
          <ToolBar lift>
            <Tools wide items={["zoomIn", "zoomOut", "zoomFull", "zoomCursor", "zoomTwo", "-zoomArea"]} />
          </ToolBar>
          <ToolBar>
            <Tools items={["*expandOff", "#expandDelta", "#expandEvent", "|", "-expandAll", "-expandAt", "-collapseAll", "-collapseAt"]} />
          </ToolBar>
        </ToolRow>
        <WaveArea>
          <HeadCell>
            <ObjectsIcon />
            <CaretTool aria-label="Object options">
              <Triangle />
            </CaretTool>
          </HeadCell>
          <Sash $col={2} />
          <HeadCell $right>Msgs</HeadCell>
          <Sash $col={4} />
          <HeadCell $dark>
            <Traces aria-hidden="true">
              <path d="M2 1h2v23h-2z" fill="#a89000" />
            </Traces>
          </HeadCell>
          <Rule />
          <Rule />
          <Rule />
          <NamePane>
            <List>
              {signals.map((s) => (
                <SignalRow key={s.name}>
                  {s.bus ? (
                    <Expander aria-label="Expand">
                      <svg width="7" height="7" shapeRendering="crispEdges">
                        <path d="M0 3h7v1H0zM3 0h1v7H3z" fill="#111" />
                      </svg>
                    </Expander>
                  ) : (
                    <i />
                  )}
                  {s.bus ? <Stem /> : <i />}
                  <SignalIcon output={s.bus} />
                  <span>{s.name}</span>
                </SignalRow>
              ))}
            </List>
            <InsertMark $start>
              <svg width="5" height="9" aria-hidden="true">
                <path d="M.5.5L4 4.500.5 8z" fill="none" stroke="#222" />
              </svg>
            </InsertMark>
          </NamePane>
          <ValuePane>
            <List>
              {signals.map((s) => (
                <ValueRow key={s.name}>{s.value}</ValueRow>
              ))}
            </List>
            <InsertMark />
          </ValuePane>
          <Traces aria-label="Waveforms">
            {gridLines.map((x) => (
              <rect key={x} x={x} y="0" width="1" height="100%" fill="#8c8c8c" />
            ))}
            <rect x="2" y="1" width="2" height="100%" fill="#a89000" />
          </Traces>
        </WaveArea>
      </Dock>
    </Window>
    <Watermark href="#">https://blog.csdn.net/yijiancmy</Watermark>
  </Desktop>
);

export default App;
